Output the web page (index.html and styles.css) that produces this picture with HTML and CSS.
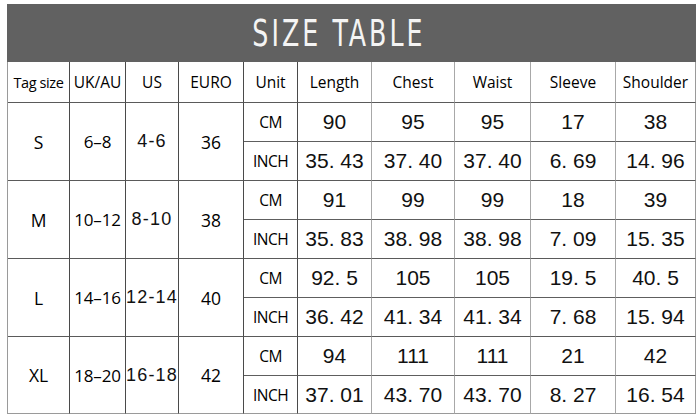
FILE: index.html
```html
<!DOCTYPE html>
<html>
<head>
<meta charset="utf-8">
<link rel="stylesheet" href="styles.css">
</head>
<body>
<div class="sheet">
  <div class="title"><span class="title-text">SIZE TABLE</span></div>
  <table class="sizes">
    <colgroup>
      <col class="c-tag"><col class="c-uk"><col class="c-us"><col class="c-euro"><col class="c-unit">
      <col class="c-len"><col class="c-chest"><col class="c-waist"><col class="c-sleeve"><col class="c-shoulder">
    </colgroup>
    <thead>
      <tr class="head">
        <th class="l tag">Tag size</th><th class="l">UK/AU</th><th class="l">US</th><th class="l">EURO</th><th class="u">Unit</th>
        <th>Length</th><th>Chest</th><th>Waist</th><th>Sleeve</th><th class="last">Shoulder</th>
      </tr>
    </thead>
    <tbody>
      <tr class="r1">
        <td rowspan="2" class="l sz">S</td><td rowspan="2" class="l uk">6–8</td><td rowspan="2" class="l us">4-6</td><td rowspan="2" class="l eu">36</td>
        <td class="u unit">CM</td><td class="v">90</td><td class="v">95</td><td class="v">95</td><td class="v">17</td><td class="v last">38</td>
      </tr>
      <tr class="r2">
        <td class="u unit">INCH</td><td class="v">35. 43</td><td class="v">37. 40</td><td class="v">37. 40</td><td class="v">6. 69</td><td class="v last">14. 96</td>
      </tr>
      <tr class="r1">
        <td rowspan="2" class="l sz">M</td><td rowspan="2" class="l uk">10–12</td><td rowspan="2" class="l us">8-10</td><td rowspan="2" class="l eu">38</td>
        <td class="u unit">CM</td><td class="v">91</td><td class="v">99</td><td class="v">99</td><td class="v">18</td><td class="v last">39</td>
      </tr>
      <tr class="r2">
        <td class="u unit">INCH</td><td class="v">35. 83</td><td class="v">38. 98</td><td class="v">38. 98</td><td class="v">7. 09</td><td class="v last">15. 35</td>
      </tr>
      <tr class="r1">
        <td rowspan="2" class="l sz">L</td><td rowspan="2" class="l uk">14–16</td><td rowspan="2" class="l us">12-14</td><td rowspan="2" class="l eu">40</td>
        <td class="u unit">CM</td><td class="v">92. 5</td><td class="v">105</td><td class="v">105</td><td class="v">19. 5</td><td class="v last">40. 5</td>
      </tr>
      <tr class="r2">
        <td class="u unit">INCH</td><td class="v">36. 42</td><td class="v">41. 34</td><td class="v">41. 34</td><td class="v">7. 68</td><td class="v last">15. 94</td>
      </tr>
      <tr class="r1 lastgroup">
        <td rowspan="2" class="l sz">XL</td><td rowspan="2" class="l uk">18–20</td><td rowspan="2" class="l us">16-18</td><td rowspan="2" class="l eu">42</td>
        <td class="u unit">CM</td><td class="v">94</td><td class="v">111</td><td class="v">111</td><td class="v">21</td><td class="v last">42</td>
      </tr>
      <tr class="r2 end">
        <td class="u unit">INCH</td><td class="v">37. 01</td><td class="v">43. 70</td><td class="v">43. 70</td><td class="v">8. 27</td><td class="v last">16. 54</td>
      </tr>
    </tbody>
  </table>
</div>
</body>
</html>
```

FILE: styles.css
```css
html, body {
  margin: 0;
  padding: 0;
  background: #ffffff;
}

.sheet {
  padding: 4px 0 0 7px;
  width: 689px;
}

.title {
  height: 58px;
  background: #616161;
  display: flex;
  align-items: center;
  justify-content: center;
  padding-right: 26px;
  box-sizing: border-box;
}

.title-text {
  font-family: "DejaVu Sans", sans-serif;
  font-stretch: condensed;
  font-weight: 400;
  font-size: 37px;
  letter-spacing: 4px;
  color: #f4f4f4;
  display: inline-block;
  transform: scaleX(0.76);
  line-height: 1;
}

.sizes {
  border-collapse: separate;
  border-spacing: 0;
  table-layout: fixed;
  width: 689px;
  border-left: 1px solid #9a9a9a;
  color: #111111;
}

.c-tag { width: 62px; }
.c-uk { width: 56px; }
.c-us { width: 53px; }
.c-euro { width: 65px; }
.c-unit { width: 54px; }
.c-len { width: 74px; }
.c-chest { width: 83px; }
.c-waist { width: 76px; }
.c-sleeve { width: 85px; }
.c-shoulder { width: 80px; }

.sizes th, .sizes td {
  padding: 0;
  text-align: center;
  vertical-align: middle;
  border-right: 1px solid #a8a8a8;
  border-bottom: 1px solid #5a5a5a;
  white-space: nowrap;
  overflow: visible;
}

.sizes th.l, .sizes td.l, .sizes td.u, .sizes th.u {
  border-right-color: #4a4a4a;
}

.sizes .last {
  border-right-color: #9a9a9a;
}

.head th {
  height: 40px;
  font-family: "Open Sans", sans-serif;
  font-weight: 400;
  font-size: 15.5px;
  color: #000;
}

.head th.tag {
  font-size: 14.5px;
  letter-spacing: -0.4px;
}

.r1 td { height: 38px; }
.r2 td { height: 38px; }
.r1 td.v, .r1 td.unit { border-bottom-color: #5e5e5e; }

.end td { border-bottom-color: #9a9a9a; height: 37px; }
.lastgroup td[rowspan] { border-bottom-color: #9a9a9a; }

.sz, .eu {
  font-family: "Open Sans", sans-serif;
  font-size: 17.5px;
  color: #000;
}

.uk {
  font-family: "Open Sans", sans-serif;
  font-size: 17px;
  letter-spacing: -0.2px;
  color: #000;
}

.us {
  font-family: "Liberation Sans", Arial, sans-serif;
  font-size: 18px;
  letter-spacing: 1.2px;
}

.unit {
  font-family: "Open Sans", sans-serif;
  font-size: 15.5px;
  letter-spacing: -0.5px;
  color: #000;
}

.v {
  font-family: "Liberation Sans", Arial, sans-serif;
  font-size: 21px;
}
```
